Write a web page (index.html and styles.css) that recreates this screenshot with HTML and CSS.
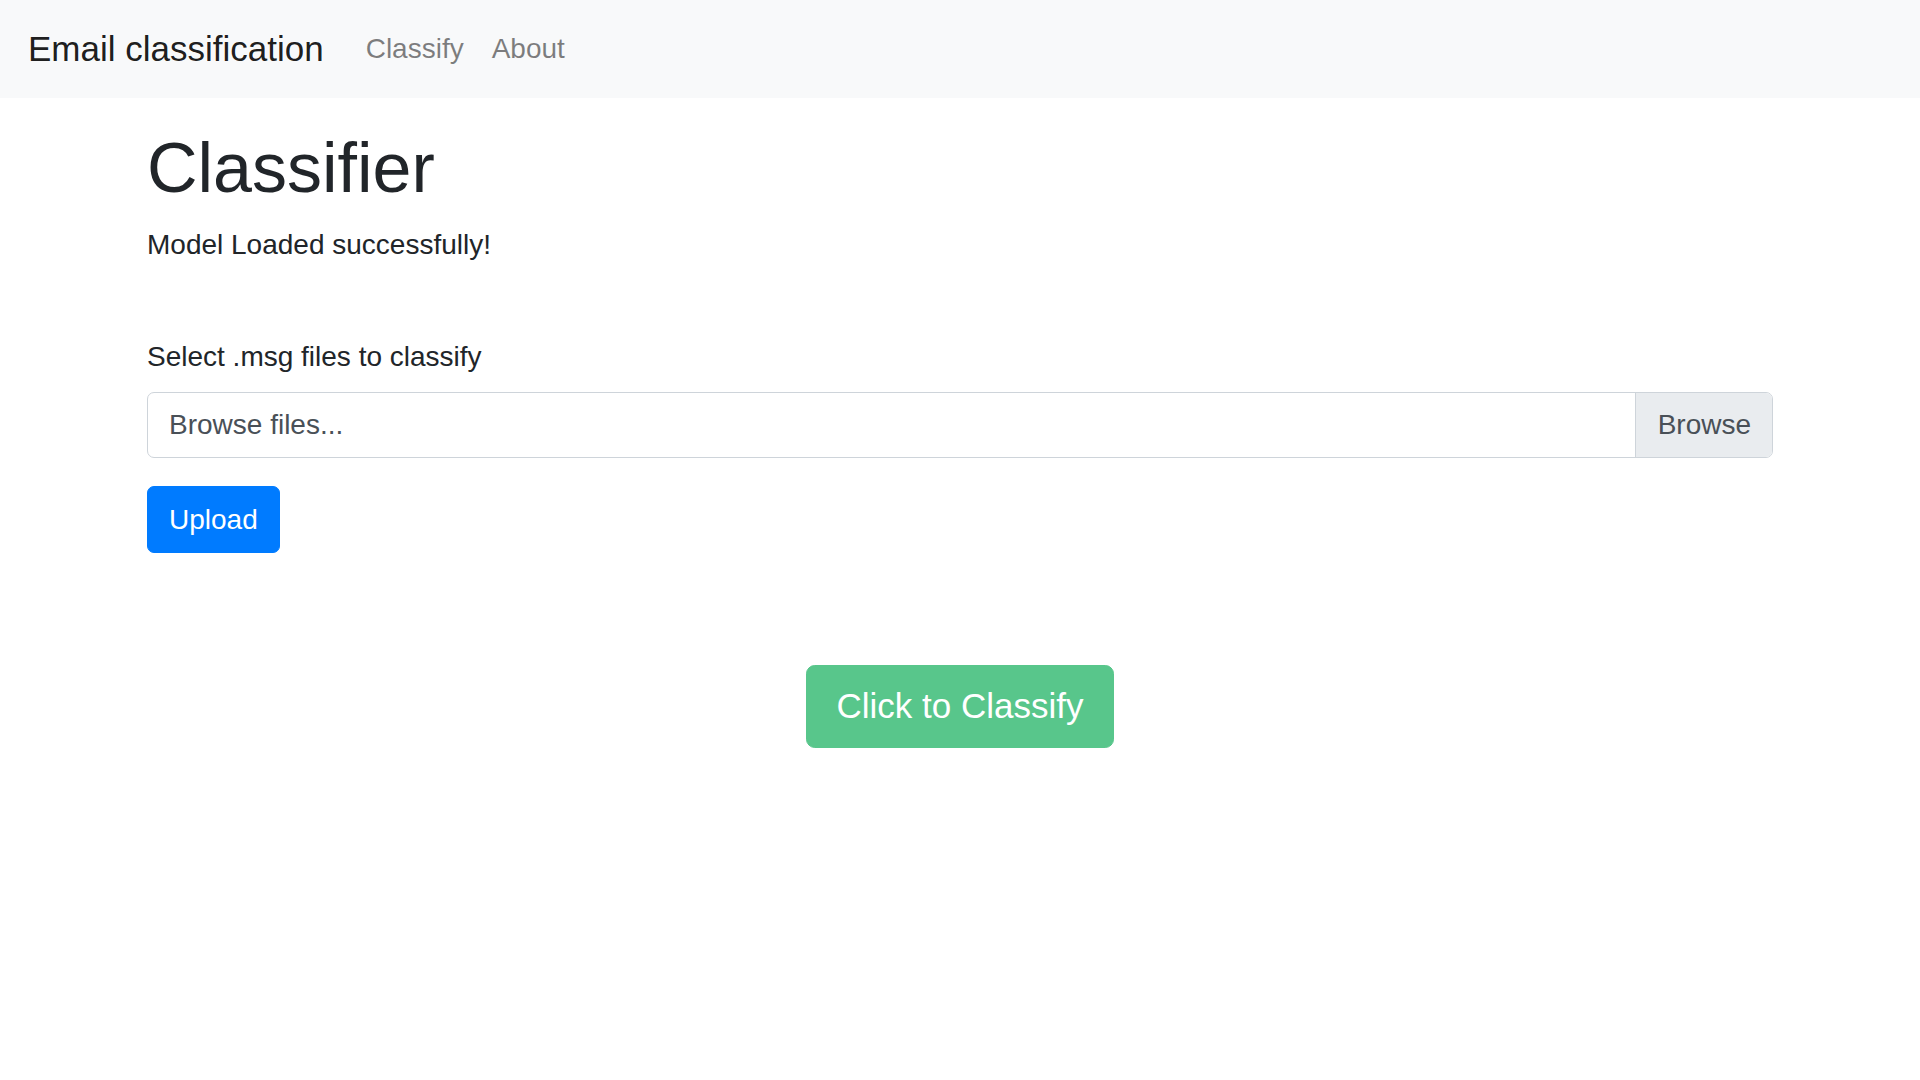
FILE: index.html
```html
<!DOCTYPE html>
<html lang="en">
<head>
<meta charset="utf-8">
<title>Email classification</title>
<link rel="stylesheet" href="styles.css">
</head>
<body>
<nav class="navbar">
  <span class="brand">Email classification</span>
  <ul class="nav">
    <li><a class="nav-link" href="#">Classify</a></li>
    <li><a class="nav-link" href="#">About</a></li>
  </ul>
</nav>
<main class="container">
  <h1 class="title">Classifier</h1>
  <p class="status">Model Loaded successfully!</p>
  <div class="spacer"></div>
  <form class="upload-form">
    <label class="label">Select .msg files to classify</label>
    <div class="file-input">
      <span class="file-text">Browse files...</span>
      <span class="file-btn">Browse</span>
    </div>
    <button type="button" class="btn btn-primary">Upload</button>
  </form>
  <div class="classify-row">
    <button type="button" class="btn btn-lg btn-green">Click to Classify</button>
  </div>
</main>
</body>
</html>
```

FILE: styles.css
```css
* { box-sizing: border-box; }
html, body { margin: 0; padding: 0; }
body {
  font-family: "Liberation Sans", Arial, sans-serif;
  font-size: 28px;
  line-height: 1.5;
  color: #212529;
  background: #fff;
}
.navbar {
  display: flex;
  align-items: center;
  background: #f8f9fa;
  padding: 14px 28px;
  height: 98px;
}
.brand {
  font-size: 35px;
  line-height: 52.5px;
  color: rgba(0,0,0,.9);
  margin-right: 28px;
}
.nav {
  display: flex;
  list-style: none;
  margin: 0;
  padding: 0;
}
.nav-link {
  display: block;
  padding: 0 14px;
  color: rgba(0,0,0,.5);
  text-decoration: none;
  font-size: 28px;
  line-height: 42px;
}
.container {
  padding: 0 147px;
}
.title {
  font-size: 70px;
  line-height: 1.2;
  margin: 28px 0 14px;
  font-weight: normal;
}
.status {
  margin: 0 0 28px;
}
.spacer { height: 42px; }
.upload-form { margin: 0; }
.label {
  display: block;
  margin-bottom: 14px;
}
.file-input {
  display: flex;
  height: 66px;
  border: 1px solid #ced4da;
  border-radius: 7px;
  margin-bottom: 28px;
  overflow: hidden;
}
.file-text {
  flex: 1;
  padding: 0 21px;
  line-height: 64px;
  color: #495057;
}
.file-btn {
  background: #e9ecef;
  border-left: 1px solid #ced4da;
  padding: 0 21px 0 22px;
  line-height: 64px;
  color: #495057;
}
.btn {
  font-family: inherit;
  border: 1px solid transparent;
  border-radius: 7px;
  font-size: 28px;
  line-height: 1.5;
  padding: 11.5px 21px;
  color: #fff;
  cursor: pointer;
}
.btn-primary {
  background: #007bff;
  border-color: #007bff;
}
.classify-row {
  display: flex;
  justify-content: center;
  margin-top: 112px;
}
.btn-lg {
  font-size: 35px;
  padding: 14px 29.5px;
  border-radius: 8.75px;
}
.btn-green {
  background: #58c68b;
  border-color: #58c68b;
}
```
